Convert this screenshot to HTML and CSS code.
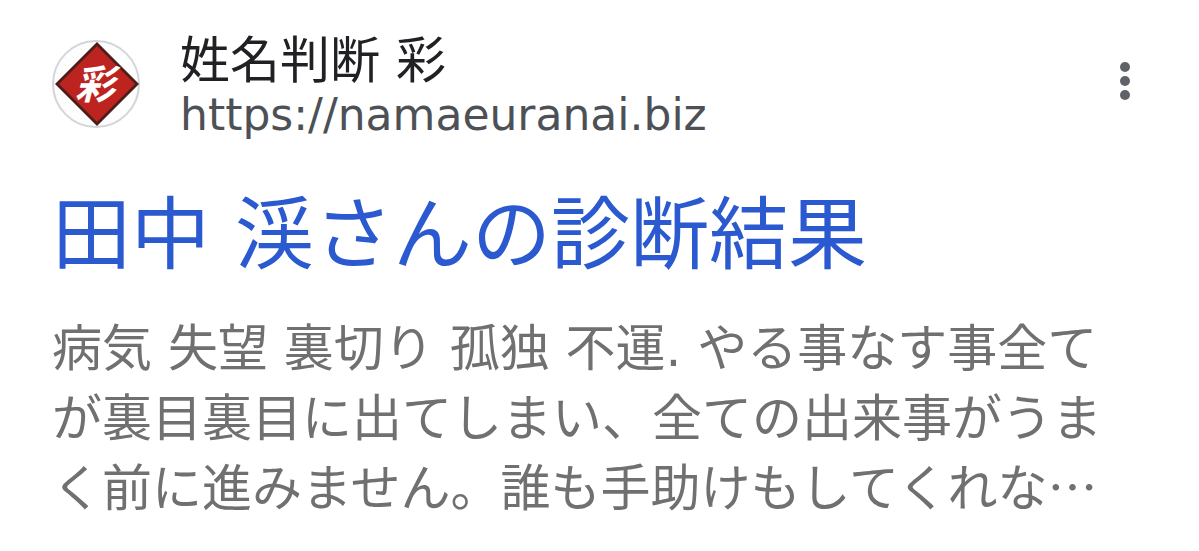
FILE: index.html
```html
<!doctype html>
<html lang="ja">
<head>
    <meta charset="UTF-8">
    <meta name="viewport" content="width=device-width, initial-scale=1.0">
    <title>田中 渓さんの診断結果</title>
    <link rel="stylesheet" href="styles.css">
</head>
<body>

<article class="result">
    <header class="site">
        <svg class="site-icon" viewBox="0 0 90 90" aria-hidden="true">
            <circle cx="44" cy="45" r="43" fill="#fdfdfd" stroke="#d3d5d8" stroke-width="2"/>
            <path d="M45 3 87 45 45 87 3 45Z" fill="#4f1d19"/>
            <path d="M45 7 83 45 45 83 7 45Z" fill="#bd2420"/>
            <text class="site-mark" x="43" y="60" text-anchor="middle">彩</text>
        </svg>
        <div class="site-info">
            <div class="site-name">姓名判断 彩</div>
            <div class="site-url">https://namaeuranai.biz</div>
        </div>
        <button class="menu" type="button" aria-label="メニュー">
            <svg class="menu-icon" viewBox="0 0 12 40" aria-hidden="true">
                <circle cx="6" cy="6" r="5"/>
                <circle cx="6" cy="20" r="5"/>
                <circle cx="6" cy="34" r="5"/>
            </svg>
        </button>
    </header>
    <h3 class="title"><a class="title-link" href="#">田中 渓さんの診断結果</a></h3>
    <p class="snippet">病気 失望 裏切り 孤独 不運. やる事なす事全てが裏目裏目に出てしまい、全ての出来事がうまく前に進みません。誰も手助けもしてくれな<span class="more">…</span></p>
</article>

</body>
</html>
```
FILE: styles.css
```css
*{
    padding: 0;
    margin: 0;
    box-sizing: border-box;
}

body{
    background: #ffffff;
    font-family: 'DejaVu Sans', 'Noto Sans CJK JP', sans-serif;
}
.result{
    padding: 34px 52px 24px;
}
.site{
    display: flex;
    align-items: flex-start;
}
.site-icon{
    width: 90px;
    height: 90px;
    margin-top: 5px;
    margin-right: 38px;
}
.site-mark{
    fill: #ffffff;
    font-size: 40px;
    font-weight: 700;
    font-style: italic;
}
.site-info{
    flex: 1;
}
.site-name{
    color: #202124;
    font-size: 50px;
    line-height: 54px;
}
.site-url{
    color: #4d5156;
    font-size: 44px;
    line-height: 54px;
}
.menu{
    width: 44px;
    height: 80px;
    margin-top: 8px;
    border: none;
    background: none;
}
.menu-icon{
    width: 12px;
    height: 40px;
    fill: #5f6368;
}
.title{
    margin-top: 44px;
    font-size: 79px;
    line-height: 100px;
    font-weight: 400;
}
.title-link{
    color: #2b59cf;
    text-decoration: none;
}
.snippet{
    margin-top: 28px;
    padding-right: 42px;
    color: #707070;
    font-size: 50px;
    line-height: 70px;
}
/* the CJK ellipsis sits mid-line, line-height 0 keeps the row spacing even */
.more{
    font-family: 'Noto Sans CJK JP', sans-serif;
    line-height: 0;
}
```
